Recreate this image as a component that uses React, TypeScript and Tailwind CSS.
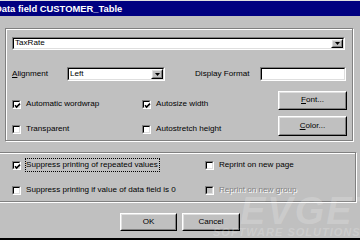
import React from "react";

function Sunken({ className, children }: { className?: string; children?: React.ReactNode }) {
  return (
    <div className={`border border-t-[#808080] border-l-[#808080] border-b-white border-r-white ${className ?? ""}`}>
      <div className="h-full w-full border border-t-black border-l-black border-b-[#dfdfdf] border-r-[#dfdfdf] bg-white flex items-center">
        {children}
      </div>
    </div>
  );
}

function Raised({ className, children }: { className?: string; children?: React.ReactNode }) {
  return (
    <div className={`border border-t-white border-l-white border-b-black border-r-black bg-[#c0c0c0] ${className ?? ""}`}>
      <div className="h-full w-full border border-t-[#dfdfdf] border-l-[#dfdfdf] border-b-[#808080] border-r-[#808080] flex items-center justify-center">
        {children}
      </div>
    </div>
  );
}

function Combo({ className, value }: { className?: string; value: string }) {
  return (
    <Sunken className={className}>
      <span className="flex-1 pl-[1px]">{value}</span>
      <Raised className="w-[12px] h-full">
        <svg width="5" height="3" viewBox="0 0 5 3">
          <path d="M0 0H5L2.5 3Z" fill="#000" />
        </svg>
      </Raised>
    </Sunken>
  );
}

function Check({ checked, disabled }: { checked?: boolean; disabled?: boolean }) {
  return (
    <div className="relative w-[9px] h-[9px] shrink-0 border border-t-[#808080] border-l-[#808080] border-b-white border-r-white">
      <div
        className={`h-full w-full border border-t-black border-l-black border-b-[#dfdfdf] border-r-[#dfdfdf] ${
          disabled ? "bg-[#c0c0c0]" : "bg-white"
        }`}
      />
      {checked && (
        <svg className="absolute left-0 top-0" width="9" height="9" viewBox="0 0 9 9">
          <path d="M2 4.2L3.6 6L7 2.6" stroke="#000" strokeWidth="1.6" fill="none" />
        </svg>
      )}
    </div>
  );
}

function Item({
  label,
  checked,
  disabled,
  focus,
  className,
}: {
  label: string;
  checked?: boolean;
  disabled?: boolean;
  focus?: boolean;
  className?: string;
}) {
  return (
    <div className={`flex items-center h-[10px] ${focus ? "gap-[4px]" : "gap-[5px]"} ${className ?? ""}`}>
      <Check checked={checked} disabled={disabled} />
      {focus ? (
        <span className="border border-dotted border-black py-[2px] pr-[1px]">{label}</span>
      ) : (
        <span className={disabled ? "text-[#808080] [text-shadow:1px_1px_0_#fff]" : ""}>{label}</span>
      )}
    </div>
  );
}

export default function App() {
  return (
    <div className="relative w-[360px] h-[240px] overflow-hidden bg-[#c0c0c0] flex flex-col font-['Liberation_Sans',Arial,sans-serif] text-[8.1px] leading-none text-black">
      <div className="h-[1px] bg-[#dfdfdf]" />
      <div className="h-[15px] bg-[#000080] flex items-center overflow-hidden">
        <span className="ml-[-5px] text-white font-bold text-[9.4px] whitespace-nowrap">Data field CUSTOMER_Table</span>
      </div>

      <div className="mt-[12px] ml-[5px] w-[348px] h-[113px] shrink-0 border border-[#808080] shadow-[inset_1px_1px_0_#fff,1px_1px_0_#fff] flex flex-col">
        <Combo className="mt-[8px] ml-[6px] w-[333px] h-[13px]" value="TaxRate" />

        <div className="mt-[17px] h-[14px] flex items-center">
          <span className="ml-[6px] w-[55px]">
            <u>A</u>lignment
          </span>
          <Combo className="w-[98px] h-[14px]" value="Left" />
          <span className="ml-[30px] w-[65px]">Display Format</span>
          <Sunken className="w-[86px] h-[14px]" />
        </div>

        <div className="mt-[10px] flex">
          <div className="ml-[6px] pt-[8px] flex flex-col gap-[15px]">
            <div className="flex">
              <Item className="w-[130px]" label="Automatic wordwrap" checked />
              <Item label="Autosize width" checked />
            </div>
            <div className="flex">
              <Item className="w-[130px]" label="Transparent" />
              <Item label="Autostretch height" />
            </div>
          </div>
          <div className="ml-auto mr-[5px] flex flex-col gap-[6px]">
            <Raised className="w-[69px] h-[19px]">
              <span>
                <u>F</u>ont...
              </span>
            </Raised>
            <Raised className="w-[69px] h-[20px]">
              <span>
                <u>C</u>olor...
              </span>
            </Raised>
          </div>
        </div>
      </div>

      <div className="mt-[11px] ml-[-2px] w-[358px] h-[50px] shrink-0 border border-[#808080] shadow-[inset_1px_1px_0_#fff,1px_1px_0_#fff] flex flex-col pt-[7px] gap-[15px]">
        <div className="flex ml-[13px]">
          <Item className="w-[193px]" label="Suppress printing of repeated values" checked focus />
          <Item label="Reprint on new page" />
        </div>
        <div className="flex ml-[13px]">
          <Item className="w-[193px]" label="Suppress printing if value of data field is 0" />
          <Item label="Reprint on new group" disabled />
        </div>
      </div>

      <div className="mt-[11px] pl-[120px] flex gap-[5px]">
        <Raised className="w-[57px] h-[18px]">OK</Raised>
        <Raised className="w-[58px] h-[18px]">Cancel</Raised>
      </div>

      <div className="mt-auto h-[2px] bg-black" />

      <span className="absolute left-[240px] top-[192px] text-[38px] font-bold italic text-white/20 tracking-[2px] leading-none pointer-events-none">
        EVGET
      </span>
      <span className="absolute left-[213px] top-[227px] text-[11px] font-bold italic text-white/20 tracking-[1px] leading-none whitespace-nowrap pointer-events-none">
        SOFTWARE SOLUTIONS
      </span>
    </div>
  );
}
